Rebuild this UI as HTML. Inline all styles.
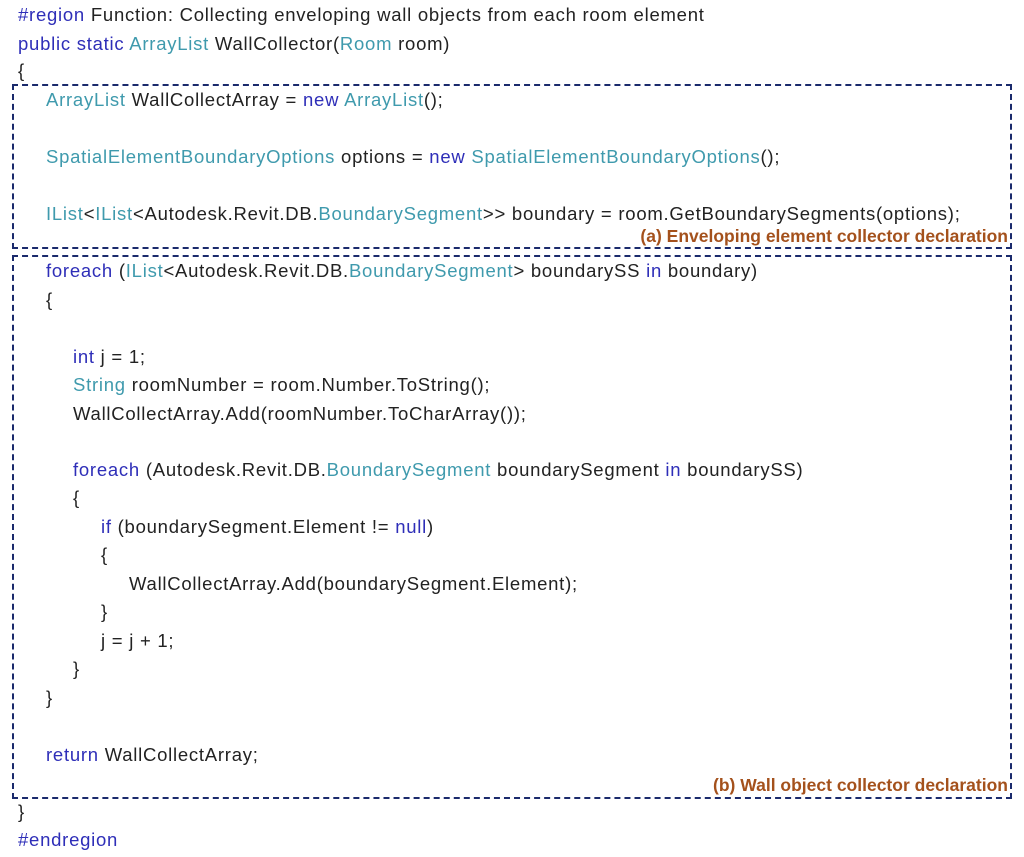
<!DOCTYPE html>
<html><head><meta charset="utf-8"><style>
body{margin:0;width:1024px;height:857px;background:#fff;position:relative;overflow:hidden;font-family:"Liberation Sans","Noto Sans CJK KR",sans-serif;font-size:18.5px;letter-spacing:0.75px;color:#222}
.l{position:absolute;white-space:pre;line-height:20px}
.k{color:#2e2eb8}.t{color:#3f9aad}
.box{position:absolute;border:2px dashed #1a2a6c;box-sizing:border-box}
.lab{position:absolute;color:#a4511c;font-weight:bold;font-size:17.5px;letter-spacing:0;white-space:pre;line-height:20px}
</style></head><body>
<div class="box" style="left:12px;top:84px;width:1000px;height:165px"></div>
<div class="box" style="left:12px;top:255px;width:1000px;height:544px"></div>
<div class="l" style="left:18px;top:5px"><span class="k">#region</span> Function: Collecting enveloping wall objects from each room element</div>
<div class="l" style="left:18px;top:34px"><span class="k">public static</span> <span class="t">ArrayList</span> WallCollector(<span class="t">Room</span> room)</div>
<div class="l" style="left:18px;top:61px">{</div>
<div class="l" style="left:46px;top:90px"><span class="t">ArrayList</span> WallCollectArray = <span class="k">new</span> <span class="t">ArrayList</span>();</div>
<div class="l" style="left:46px;top:147px"><span class="t">SpatialElementBoundaryOptions</span> options = <span class="k">new</span> <span class="t">SpatialElementBoundaryOptions</span>();</div>
<div class="l" style="left:46px;top:204px"><span class="t">IList</span>&lt;<span class="t">IList</span>&lt;Autodesk.Revit.DB.<span class="t">BoundarySegment</span>&gt;&gt; boundary = room.GetBoundarySegments(options);</div>
<div class="lab" style="right:16px;top:226px">(a) Enveloping element collector declaration</div>
<div class="l" style="left:46px;top:261px"><span class="k">foreach</span> (<span class="t">IList</span>&lt;Autodesk.Revit.DB.<span class="t">BoundarySegment</span>&gt; boundarySS <span class="k">in</span> boundary)</div>
<div class="l" style="left:46px;top:290px">{</div>
<div class="l" style="left:73px;top:347px"><span class="k">int</span> j = 1;</div>
<div class="l" style="left:73px;top:375px"><span class="t">String</span> roomNumber = room.Number.ToString();</div>
<div class="l" style="left:73px;top:404px">WallCollectArray.Add(roomNumber.ToCharArray());</div>
<div class="l" style="left:73px;top:460px"><span class="k">foreach</span> (Autodesk.Revit.DB.<span class="t">BoundarySegment</span> boundarySegment <span class="k">in</span> boundarySS)</div>
<div class="l" style="left:73px;top:488px">{</div>
<div class="l" style="left:101px;top:517px"><span class="k">if</span> (boundarySegment.Element != <span class="k">null</span>)</div>
<div class="l" style="left:101px;top:545px">{</div>
<div class="l" style="left:129px;top:574px">WallCollectArray.Add(boundarySegment.Element);</div>
<div class="l" style="left:101px;top:602px">}</div>
<div class="l" style="left:101px;top:631px">j = j + 1;</div>
<div class="l" style="left:73px;top:659px">}</div>
<div class="l" style="left:46px;top:688px">}</div>
<div class="l" style="left:46px;top:745px"><span class="k">return</span> WallCollectArray;</div>
<div class="lab" style="right:16px;top:775px">(b) Wall object collector declaration</div>
<div class="l" style="left:18px;top:802px">}</div>
<div class="l" style="left:18px;top:830px"><span class="k">#endregion</span></div>
</body></html>
